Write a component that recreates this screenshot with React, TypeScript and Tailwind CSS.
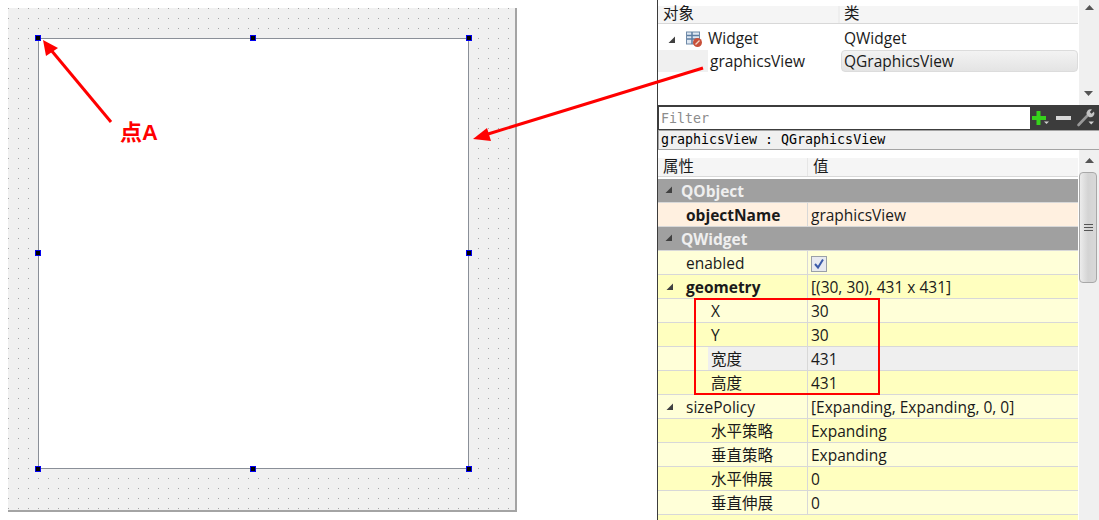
const sans = "font-['Open_Sans','Noto_Sans_CJK_SC',sans-serif]";

function Tri({ className = "" }: { className?: string }) {
  return (
    <svg width="9" height="9" viewBox="0 0 9 9" className={className}>
      <path d="M8 1.5V8H1.5Z" fill="#404040" />
    </svg>
  );
}

function Handle({ className }: { className: string }) {
  return <div className={`absolute w-1.5 h-1.5 bg-black border-[1.5px] border-[#0000f0] ${className}`} />;
}

function Scrollbar({ children }: { children?: React.ReactNode }) {
  return <div className="w-[20px] shrink-0 bg-[#f0f0f0] flex flex-col relative">{children}</div>;
}

function ArrowUp() {
  return (
    <svg width="9" height="5" viewBox="0 0 9 5">
      <path d="M0 5L4.5 0L9 5Z" fill="#555" />
    </svg>
  );
}

type RowProps = {
  label: string;
  value?: React.ReactNode;
  pad: string;
  bg: string;
  bold?: boolean;
  tree?: boolean;
};

function Row({ label, value, pad, bg, bold, tree }: RowProps) {
  return (
    <div className={`h-6 flex border-b border-[#d8d8d8] ${bg}`}>
      <div className="w-[150px] flex border-r border-[#d8d8d8] relative">
        {tree && <Tri className="absolute left-[7px] top-[7px]" />}
        <div className={`flex-1 pt-[2px] flex items-center ${pad}`}>
          <span className={bold ? "font-bold" : ""}>{label}</span>
        </div>
      </div>
      <div className="flex-1 pl-[3px] pt-[2px] flex items-center">{value}</div>
    </div>
  );
}

function GroupRow({ label }: { label: string }) {
  return (
    <div className="h-6 bg-[#a0a0a0] border-b border-[#d8d8d8] flex items-center relative pl-[23px] pt-[2px] font-bold text-[#efefef]">
      <Tri className="absolute left-[6px] top-[6px]" />
      {label}
    </div>
  );
}

export default function App() {
  const light = "bg-[#ffffd8]";
  const dark = "bg-[#ffffbf]";
  return (
    <div className={`relative w-[1099px] h-[520px] overflow-hidden bg-white flex text-[15.5px] text-[#1a1a1a] ${sans}`}>
      {/* form canvas */}
      <div className="w-[657px] shrink-0 pl-2 pt-2">
        <div className="relative w-[509px] h-[504px] pl-[30px] pt-[30px] bg-[#f0f0f0] border-r-2 border-b-2 border-[#a4a4a4] bg-[conic-gradient(at_1px_1px,transparent_270deg,#a8a8a8_270deg)] bg-[length:10px_10px] bg-[position:0px_0px]">
          <div className="w-[431px] h-[431px] bg-white border border-[#8a8f98]" />
          <Handle className="left-[27px] top-[27px]" />
          <Handle className="left-[242px] top-[27px]" />
          <Handle className="left-[458px] top-[27px]" />
          <Handle className="left-[27px] top-[242px]" />
          <Handle className="left-[458px] top-[242px]" />
          <Handle className="left-[27px] top-[458px]" />
          <Handle className="left-[242px] top-[458px]" />
          <Handle className="left-[458px] top-[458px]" />
        </div>
      </div>

      {/* designer side panels */}
      <div className="flex-1 border-l border-[#3c3c3c] flex flex-col min-w-0">
        {/* object inspector */}
        <div className="h-[105px] flex shrink-0">
          <div className="flex-1 pt-[6px] pr-px">
            <div className="h-[18px] flex bg-[#f5f5f5] border-b border-[#d8d8d8] leading-[14px]">
              <div className="w-[182px] pl-[5px] border-r-2 border-[#eeeeee]">对象</div>
              <div className="flex-1 pl-[4px]">类</div>
            </div>
            <div className="h-[26px] pt-[4px] flex items-center">
              <div className="w-[183px] flex items-center">
                <Tri className="ml-[9px]" />
                <svg width="17" height="17" viewBox="0 0 17 17" className="ml-[10px] mr-[5px]">
                  <rect x="0.5" y="1" width="13" height="12" fill="#dfe8f2" stroke="#6f8aa8" />
                  <path d="M1 4.5H13M1 8H13M6 1V13" stroke="#5d7ea3" strokeWidth="1.5" />
                  <circle cx="11.5" cy="11.5" r="4.5" fill="#c8503a" />
                  <path d="M9.5 13.5L13.5 9.5" stroke="#f3d6c8" strokeWidth="1.2" />
                </svg>
                <span>Widget</span>
              </div>
              <div className="pl-[3px]">QWidget</div>
            </div>
            <div className="h-[22px] flex items-center">
              <div className="w-[50px] h-full bg-[#f0f0f0]" />
              <div className="w-[133px] pl-[2px] pt-[2px]">graphicsView</div>
              <div className="flex-1 h-full pl-[2px] pt-[2px] flex items-center rounded-sm border border-[#dcdcdc] bg-linear-to-b from-[#f3f3f3] to-[#e4e4e4]">
                QGraphicsView
              </div>
            </div>
          </div>
          <Scrollbar>
            <div className="h-[10px] flex items-end justify-center">
              <ArrowUp />
            </div>
            <div className="flex-1" />
            <div className="h-[14px] pb-[6px] mb-[6px] flex items-end justify-center rotate-180">
              <ArrowUp />
            </div>
          </Scrollbar>
        </div>

        {/* filter bar */}
        <div className="h-[25px] bg-[#3c3c3c] pl-px pt-[2px] flex shrink-0">
          <input
            readOnly
            placeholder="Filter"
            className="w-[371px] h-[22px] bg-white px-[2px] font-['DejaVu_Sans_Mono',monospace] text-[13.3px] placeholder:text-[#8c8c8c] outline-none"
          />
          <div className="flex items-center h-[22px] relative">
            <svg width="20" height="18" viewBox="0 0 20 18" className="ml-[1px]">
              <path d="M5.5 2H9.5V7H15V11H9.5V16H5.5V11H1V7H5.5Z" fill="#36d21c" />
              <path d="M13 12.5H18L15.5 15Z" fill="#d0d0d0" />
            </svg>
            <svg width="18" height="18" viewBox="0 0 18 18" className="ml-[4px]">
              <rect x="1" y="7" width="15" height="4" fill="#d8d8d8" />
            </svg>
            <svg width="20" height="22" viewBox="0 0 20 22" className="ml-[3px]">
              <path d="M2.5 18L12 8" stroke="#999" strokeWidth="2.6" strokeLinecap="round" />
              <path d="M11 8A4 4 0 0 1 16 2.5L13.8 5L15.5 6.8L18 4.5A4 4 0 0 1 13 10Z" fill="#c4c4c4" />
              <path d="M12.5 14.5H18L15.2 17.5Z" fill="#d0d0d0" />
            </svg>
          </div>
        </div>

        <div className="h-[20px] shrink-0 bg-[#f0f0f0] border border-[#a4a4a4] border-r-0 pl-[2px] font-['DejaVu_Sans_Mono',monospace] text-[13.3px] leading-[18px] text-black">
          graphicsView : QGraphicsView
        </div>

        {/* property editor */}
        <div className="flex-1 flex min-h-0">
          <div className="flex-1 overflow-hidden pr-px">
            <div className="h-[29px] pt-[8px] pb-[2px] flex bg-white">
              <div className="flex w-full h-[19px] bg-[#f5f5f5] border-b border-[#d8d8d8] leading-[17px]">
                <div className="w-[150px] pl-[5px] border-r border-[#e6e6e6]">属性</div>
                <div className="flex-1 pl-[5px]">值</div>
              </div>
            </div>
            <GroupRow label="QObject" />
            <Row label="objectName" value="graphicsView" pad="pl-[28px]" bg="bg-[#fff0e0]" bold />
            <GroupRow label="QWidget" />
            <Row
              label="enabled"
              pad="pl-[28px]"
              bg={light}
              value={
                <svg width="16" height="16" viewBox="0 0 16 16">
                  <rect x="0.5" y="0.5" width="15" height="15" fill="#e8eaf0" stroke="#9aa0a8" />
                  <path d="M4 8L7 11.5L12 3.5" fill="none" stroke="#3b5ba8" strokeWidth="2" />
                </svg>
              }
            />
            <Row label="geometry" value="[(30, 30), 431 x 431]" pad="pl-[28px]" bg={dark} bold tree />
            <Row label="X" value="30" pad="pl-[53px]" bg={light} />
            <Row label="Y" value="30" pad="pl-[53px]" bg={dark} />
            <div className="h-6 flex border-b border-[#d8d8d8] bg-[#efefef]">
              <div className="w-[50px] bg-[#ffffd8]" />
              <div className="w-[100px] pl-[3px] pt-[2px] flex items-center border-r border-[#d8d8d8]">宽度</div>
              <div className="flex-1 pl-[3px] pt-[2px] flex items-center">431</div>
            </div>
            <Row label="高度" value="431" pad="pl-[53px]" bg={dark} />
            <Row label="sizePolicy" value="[Expanding, Expanding, 0, 0]" pad="pl-[28px]" bg={light} tree />
            <Row label="水平策略" value="Expanding" pad="pl-[53px]" bg={dark} />
            <Row label="垂直策略" value="Expanding" pad="pl-[53px]" bg={light} />
            <Row label="水平伸展" value="0" pad="pl-[53px]" bg={dark} />
            <Row label="垂直伸展" value="0" pad="pl-[53px]" bg={light} />
            <div className={`h-6 ${dark}`} />
          </div>
          <Scrollbar>
            <div className="h-[22px] pb-[9px] flex items-end justify-center">
              <ArrowUp />
            </div>
            <div className="h-[111px] w-[18px] rounded-sm border border-[#a8a8a8] bg-linear-to-r from-[#ececec] via-[#d4d4d4] to-[#d8d8d8] flex flex-col items-center justify-center gap-[2px]">
              <div className="w-[9px] h-px bg-[#555]" />
              <div className="w-[9px] h-px bg-[#555]" />
              <div className="w-[9px] h-px bg-[#555]" />
            </div>
          </Scrollbar>
        </div>
      </div>

      {/* annotations drawn over the screenshot */}
      <div className="absolute left-[694px] top-[298px] w-[186px] h-[97px] border-2 border-[#ff0000]" />
      <div className="absolute left-[120px] top-[120px] text-[22px] leading-[26px] font-bold text-[#ff0000] font-['Liberation_Sans','Noto_Sans_CJK_SC',sans-serif]">
        点A
      </div>
      <svg width="1099" height="520" viewBox="0 0 1099 520" className="absolute left-0 top-0 pointer-events-none">
        <path d="M111 122L51 50" stroke="#ff0000" strokeWidth="3" />
        <path d="M43 40L58 48L46 56Z" fill="#ff0000" />
        <path d="M703 68L488 134" stroke="#ff0000" strokeWidth="3" />
        <path d="M473 139L487 128L491 141Z" fill="#ff0000" />
      </svg>
    </div>
  );
}
